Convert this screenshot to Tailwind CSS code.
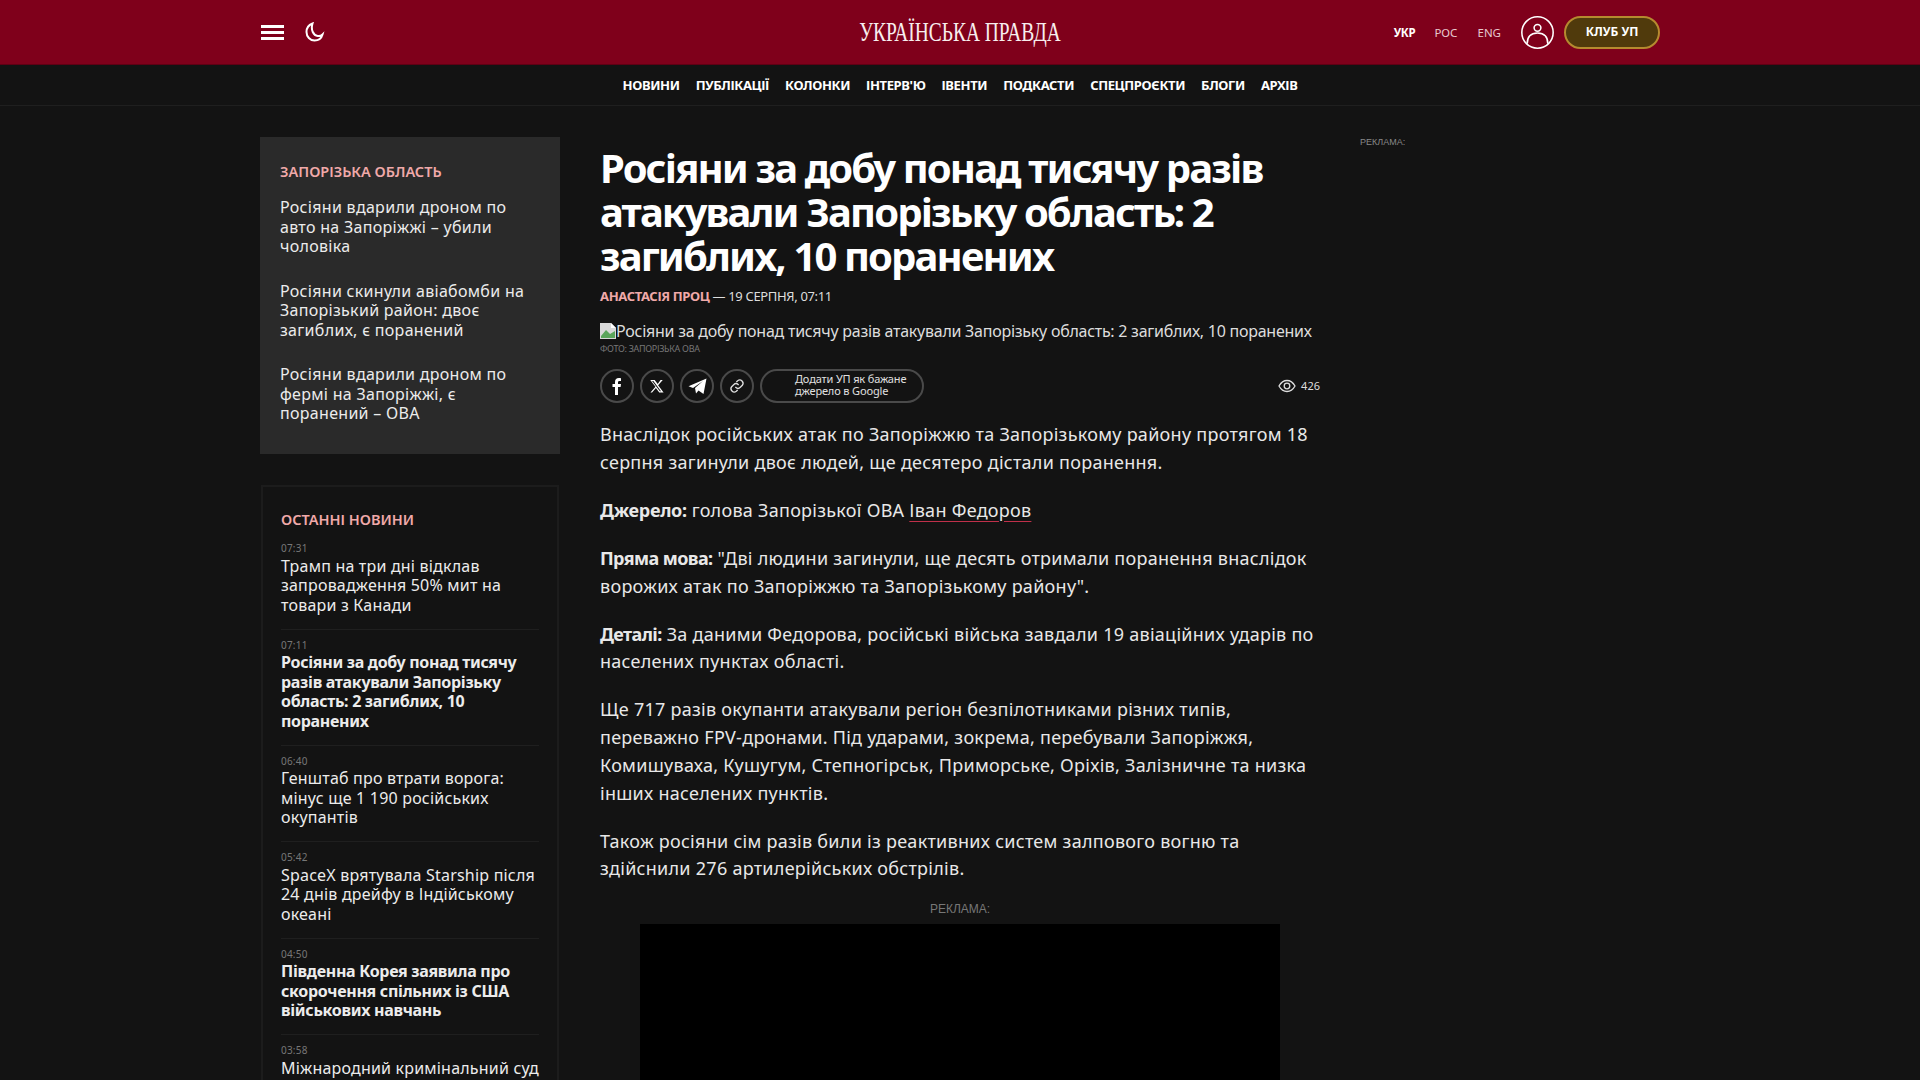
<!DOCTYPE html>
<html lang="uk">
<head>
    <meta charset="UTF-8">
    <title>Українська правда</title>
    <script src="https://cdn.jsdelivr.net/npm/@tailwindcss/browser@4"></script>
</head>
<body class="bg-[#131313] h-[1080px] overflow-hidden font-['Noto_Sans',sans-serif] text-[#ececec]">
    <!-- red header -->
    <header class="h-[65px] bg-[#7f001b] border-b border-[#5f0014]">
        <div class="w-[1400px] mx-auto h-full flex items-center relative">
            <div class="flex flex-col gap-[3px] w-[23px] ml-px">
                <span class="h-[3px] bg-white"></span>
                <span class="h-[3px] bg-white"></span>
                <span class="h-[3px] bg-white"></span>
            </div>
            <svg class="ml-[21px]" width="20" height="20" viewBox="0 0 20 20" fill="none" stroke="#fff" stroke-width="2"><path d="M7.500 1.500C3.500 3 1.500 6 1.500 10c0 4.600 3.600 8.500 8 8.500 3.800 0 7-2.300 8-6-1.200 1.200-3 1.700-4.800 1.500C8.500 13.500 5.500 8 7.500 1.500z"/></svg>
            <div class="absolute left-0 right-0 flex justify-center whitespace-nowrap font-['Liberation_Serif',serif] text-[27px] text-[#f8eeee] scale-x-[.72]">УКРАЇНСЬКА ПРАВДА</div>
            <div class="ml-auto flex items-center">
                <span class="text-[11.5px] tracking-[-.3px] mt-[2px] font-bold text-white">УКР</span>
                <span class="text-[11.5px] mt-[2px] text-[#e6c8ce] ml-[19px]">РОС</span>
                <span class="text-[11.5px] mt-[2px] text-[#e6c8ce] ml-[20px]">ENG</span>
                <svg class="ml-5" width="33" height="33" viewBox="0 0 32 32" fill="none" stroke="#fff" stroke-width="1.500"><circle cx="16" cy="16" r="15.200"/><circle cx="16" cy="11.500" r="3.300"/><path d="M6 27c0-7 4-10.500 10-10.500S26 20 26 27"/></svg>
                <button class="ml-[10px] w-[96px] h-[33px] rounded-full bg-[#503a0c] border-2 border-[#b58a2f] text-white text-[12px] font-bold">КЛУБ УП</button>
            </div>
        </div>
    </header>
    <!-- section nav -->
    <nav class="h-[41px] pt-[2px] border-b border-[#1f1f1f] flex justify-center items-center gap-4 text-[13px] tracking-[-.37px] font-bold text-white">
        <a>НОВИНИ</a><a>ПУБЛІКАЦІЇ</a><a>КОЛОНКИ</a><a>ІНТЕРВ'Ю</a><a>ІВЕНТИ</a><a>ПОДКАСТИ</a><a>СПЕЦПРОЄКТИ</a><a>БЛОГИ</a><a>АРХІВ</a>
    </nav>
    <div class="w-[1400px] mx-auto flex pt-[31px]">
        <!-- left column -->
        <aside class="w-[300px] shrink-0">
            <section class="h-[317px] bg-[#2a2a2a] pt-[25px] pl-[20px] pr-[30px]">
                <h3 class="text-[14.500px] leading-[18px] font-semibold text-[#f0a9a9] whitespace-nowrap">ЗАПОРІЗЬКА ОБЛАСТЬ</h3>
                <div class="mt-[18px] flex flex-col gap-[25px] text-[16px] leading-[19.5px] tracking-[.3px]">
                    <a class="block">Росіяни вдарили дроном по авто на Запоріжжі – убили чоловіка</a>
                    <a class="block">Росіяни скинули авіабомби на Запорізький район: двоє загиблих, є поранений</a>
                    <a class="block">Росіяни вдарили дроном по фермі на Запоріжжі, є поранений – ОВА</a>
                </div>
            </section>
            <section class="mt-[31px] mx-[1px] border-2 border-[#1c1c1c] border-b-0 pt-[23px] pl-[18px] pr-[18px] h-[700px]">
                <h3 class="text-[14.500px] leading-[18px] font-semibold text-[#f0a9a9]">ОСТАННІ НОВИНИ</h3>
                <div class="mt-[14px] flex flex-col text-[16px] leading-[19.5px] tracking-[.2px]">
                    <div class="pb-[13.500px] border-b border-[#1f1f1f]">
                        <p class="text-[10px] leading-[12px] text-[#777] mb-[2.500px]">07:31</p>
                        <a class="block">Трамп на три дні відклав запровадження 50% мит на товари з Канади</a>
                    </div>
                    <div class="pt-[9px] pb-[13.500px] border-b border-[#1f1f1f]">
                        <p class="text-[10px] leading-[12px] text-[#777] mb-[2.500px]">07:11</p>
                        <a class="block font-bold tracking-[-.3px]">Росіяни за добу понад тисячу разів атакували Запорізьку область: 2 загиблих, 10 поранених</a>
                    </div>
                    <div class="pt-[9px] pb-[13.500px] border-b border-[#1f1f1f]">
                        <p class="text-[10px] leading-[12px] text-[#777] mb-[2.500px]">06:40</p>
                        <a class="block">Генштаб про втрати ворога: мінус ще 1 190 російських окупантів</a>
                    </div>
                    <div class="pt-[9px] pb-[13.500px] border-b border-[#1f1f1f]">
                        <p class="text-[10px] leading-[12px] text-[#777] mb-[2.500px]">05:42</p>
                        <a class="block">SpaceX врятувала Starship після 24 днів дрейфу в Індійському океані</a>
                    </div>
                    <div class="pt-[9px] pb-[13.500px] border-b border-[#1f1f1f]">
                        <p class="text-[10px] leading-[12px] text-[#777] mb-[2.500px]">04:50</p>
                        <a class="block font-bold tracking-[-.3px]">Південна Корея заявила про скорочення спільних із США військових навчань</a>
                    </div>
                    <div class="pt-[9px]">
                        <p class="text-[10px] leading-[12px] text-[#777] mb-[2.500px]">03:58</p>
                        <a class="block whitespace-nowrap">Міжнародний кримінальний суд</a>
                    </div>
                </div>
            </section>
        </aside>
        <!-- article -->
        <main class="w-[720px] ml-[40px] shrink-0">
            <h1 class="text-[40px] leading-[44px] font-bold text-white mt-[9px] tracking-[-1.870px]">Росіяни за добу понад тисячу разів атакували Запорізьку область: 2 загиблих, 10 поранених</h1>
            <div class="mt-[8px] text-[13px] tracking-[-.35px] leading-[20px] text-[#ddd]"><span class="font-bold text-[#f0a9a9]">АНАСТАСІЯ ПРОЦ</span> — 19 СЕРПНЯ, 07:11</div>
            <div class="mt-[14px] h-[22px] flex items-center text-[16px] tracking-[-.25px] text-[#ddd] whitespace-nowrap">
                <svg class="shrink-0" width="16" height="16" viewBox="0 0 16 16"><path d="M0 0h11l5 5v11H0z" fill="#d8d8d8"/><path d="M11 0v5h5z" fill="#fff"/><path d="M1 13l5-6 4 4 5-3v7H1z" fill="#5ba55b"/></svg>
                <span>Росіяни за добу понад тисячу разів атакували Запорізьку область: 2 загиблих, 10 поранених</span>
            </div>
            <div class="mt-px text-[9px] tracking-[-.3px] leading-[12px] text-[#777]">ФОТО: ЗАПОРІЗЬКА ОВА</div>
            <div class="mt-[14px] flex items-center gap-[6px]">
                <span class="w-[34px] h-[34px] rounded-full border-2 border-[#4a4a4a] flex items-center justify-center">
                    <svg width="16" height="18" viewBox="0 0 16 18" fill="#fff"><path d="M6 18V10H3.500V7H6V5c0-2.600 1.500-4 3.800-4 1 0 2 .1 2.200.2v2.700h-1.500C9.300 3.900 9 4.500 9 5.400V7h3l-.4 3H9v8z"/></svg>
                </span>
                <span class="w-[34px] h-[34px] rounded-full border-2 border-[#4a4a4a] flex items-center justify-center">
                    <svg width="14" height="14" viewBox="0 0 24 24" fill="#fff"><path d="M18.200 1.500h3.700l-8 9.200 9.400 12.400h-7.400l-5.800-7.600-6.600 7.600H.8l8.600-9.800L.4 1.500H8l5.200 6.900zm-1.300 19.400h2L5.700 3.600H3.500z"/></svg>
                </span>
                <span class="w-[34px] h-[34px] rounded-full border-2 border-[#4a4a4a] flex items-center justify-center">
                    <svg width="19" height="17" viewBox="0 0 19 17" fill="#fff"><path d="M18.500.5L15.500 16l-5-3.500-2.500 3-1-5.500L15 3 5 10 .5 8.300z"/></svg>
                </span>
                <span class="w-[34px] h-[34px] rounded-full border-2 border-[#4a4a4a] flex items-center justify-center">
                    <svg width="16" height="16" viewBox="0 0 24 24" fill="none" stroke="#ddd" stroke-width="2" stroke-linecap="round"><path d="M10 14a5 5 0 0 0 7 0l3-3a5 5 0 0 0-7-7l-1.500 1.500"/><path d="M14 10a5 5 0 0 0-7 0l-3 3a5 5 0 0 0 7 7l1.500-1.500"/></svg>
                </span>
                <span class="w-[164px] h-[34px] rounded-full border-2 border-[#4a4a4a] pl-[33px] pb-[2px] flex items-center">
                    <span class="block text-[11px] tracking-[-.15px] leading-[12px] text-[#e0e0e0]">Додати УП як бажане<br>джерело в Google</span>
                </span>
                <span class="ml-auto flex items-center gap-[5px] text-[11px] text-[#ddd]">
                    <svg width="18" height="14" viewBox="0 0 18 14" fill="none" stroke="#ddd" stroke-width="1.300"><path d="M1 7c2-3.600 4.800-5.500 8-5.500S15 3.400 17 7c-2 3.600-4.800 5.500-8 5.500S3 10.600 1 7z"/><circle cx="9" cy="7" r="2.800"/></svg>
                    426
                </span>
            </div>
            <article class="mt-[18px] text-[18px] leading-[27.7px] tracking-[.27px] text-[#e8e8e8] flex flex-col gap-[20.400px]">
                <p>Внаслідок російських атак по Запоріжжю та Запорізькому району протягом 18 серпня загинули двоє людей, ще десятеро дістали поранення.</p>
                <p><b class="tracking-[-.3px]">Джерело:</b> голова Запорізької ОВА <a class="underline decoration-[#c0304a] underline-offset-4">Іван Федоров</a></p>
                <p><b class="tracking-[-.6px]">Пряма мова:</b> "Дві людини загинули, ще десять отримали поранення внаслідок ворожих атак по Запоріжжю та Запорізькому району".</p>
                <p><b class="tracking-[-.6px]">Деталі:</b> За даними Федорова, російські війська завдали 19 авіаційних ударів по населених пунктах області.</p>
                <p>Ще 717 разів окупанти атакували регіон безпілотниками різних типів, переважно FPV-дронами. Під ударами, зокрема, перебували Запоріжжя, Комишуваха, Кушугум, Степногірськ, Приморське, Оріхів, Залізничне та низка інших населених пунктів.</p>
                <p>Також росіяни сім разів били із реактивних систем залпового вогню та здійснили 276 артилерійських обстрілів.</p>
            </article>
            <div class="mt-[19px] text-center font-['Liberation_Sans',sans-serif] text-[12px] leading-[14px] text-[#777]">РЕКЛАМА:</div>
            <div class="mt-[8px] mx-auto w-[640px] h-[300px] bg-black"></div>
        </main>
        <!-- right ad column -->
        <aside class="ml-[40px] -mt-px font-['Liberation_Sans',sans-serif] text-[9px] leading-[12px] text-[#888]">РЕКЛАМА:</aside>
    </div>
</body>
</html>
